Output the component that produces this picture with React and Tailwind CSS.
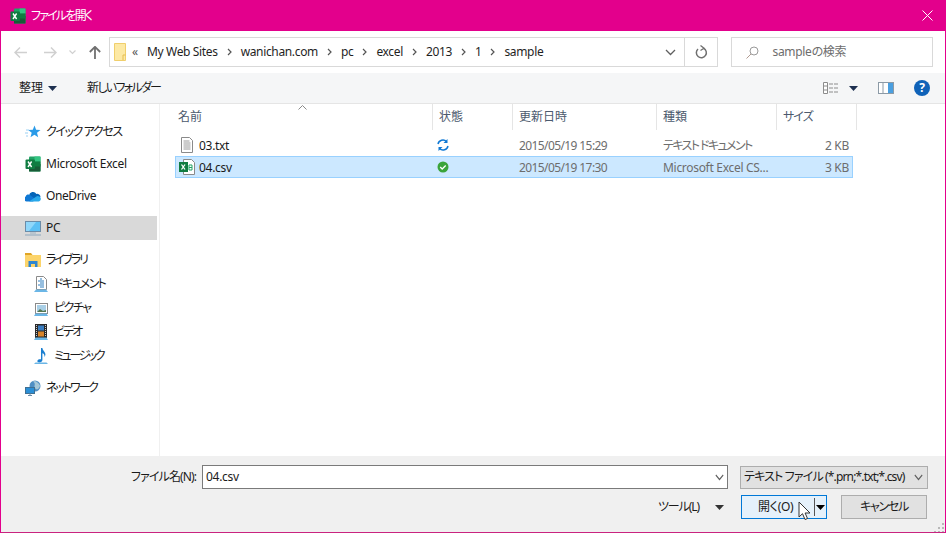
function ExcelIcon({ size = 16 }) {
  return (
    <svg width={size} height={size} viewBox="0 0 16 16" className="shrink-0">
      <rect x="4" y="0.5" width="11.5" height="15" rx="1" fill="#21a366" />
      <rect x="9.5" y="0.5" width="6" height="5" fill="#33c481" />
      <rect x="4" y="8" width="11.5" height="7.5" fill="#185c37" />
      <rect x="9.5" y="5.5" width="6" height="5" fill="#107c41" />
      <rect x="0.5" y="3.5" width="9.5" height="9.5" rx="1" fill="#107c41" />
      <path d="M3 5.5l3.6 5.5M6.6 5.5L3 11" stroke="#fff" strokeWidth="1.4" />
    </svg>
  );
}

function StarIcon() {
  return (
    <svg width="16" height="16" viewBox="0 0 16 16" className="shrink-0">
      <path d="M9.5 1.5l1.6 4.2 4.4.2-3.5 2.8 1.2 4.6-3.8-2.6-3.9 2.6 1.2-4.6-3.4-2.8 4.5-.2z" fill="#2a9be8" />
      <path d="M1 6h3M0 9h3M1 12h2" stroke="#9bd0f2" strokeWidth="1" />
    </svg>
  );
}

function CloudIcon() {
  return (
    <svg width="16" height="16" viewBox="0 0 16 16" className="shrink-0">
      <path d="M4 7.5a4 4 0 0 1 7.4-1.6A3.4 3.4 0 0 1 15.5 9L8 12z" fill="#0364b8" />
      <path d="M1.5 13.5a2.6 2.6 0 0 1-.8-5A2.8 2.8 0 0 1 5 6.9l6 4.6-3 2z" fill="#0f78d4" />
      <path d="M4 13.5L11 8.7a2.9 2.9 0 0 1 4.7 2.9c-.2 1-1 1.9-2 1.9z" fill="#28a8ea" />
    </svg>
  );
}

function PcIcon() {
  return (
    <svg width="16" height="16" viewBox="0 0 16 16" className="shrink-0">
      <rect x="0.5" y="1.5" width="15" height="10" fill="#5cc0f5" stroke="#6b8ca8" />
      <path d="M1 2h10L4 11H1z" fill="#90d7fa" />
      <path d="M5 13h6" stroke="#9cb4c6" strokeWidth="1" />
      <path d="M0 15h16" stroke="#8ba7bd" strokeWidth="1" />
    </svg>
  );
}

function LibraryIcon() {
  return (
    <svg width="16" height="16" viewBox="0 0 16 16" className="shrink-0">
      <path d="M0 1h6l1.5 2H0z" fill="#e0a526" />
      <rect x="0" y="3" width="16" height="12" fill="#fcd46a" />
      <path d="M3.5 15V9h9v6H10v-3H6v3z" fill="#2e86d0" />
    </svg>
  );
}

function DocLibIcon() {
  return (
    <svg width="16" height="16" viewBox="0 0 16 16" className="shrink-0">
      <path d="M3.5 0.5h7l3 3v10h-10z" fill="#fff" stroke="#8a8a8a" />
      <path d="M7 3h2M5 5h6M7 7h4M5 9h6M7 11h4" stroke="#2f7fbf" strokeWidth="1" />
      <path d="M1 16h14l-2-2.5H3z" fill="#6bb6e6" />
    </svg>
  );
}

function PicLibIcon() {
  return (
    <svg width="16" height="16" viewBox="0 0 16 16" className="shrink-0">
      <rect x="2.5" y="3.5" width="12" height="10" fill="#fff" stroke="#8a8a8a" />
      <rect x="4" y="5" width="9" height="7" fill="#a9cfe6" />
      <path d="M4 12l3-3 3 2 3-1v2z" fill="#56784f" />
      <path d="M1 16h14l-1.5-2.5h-11z" fill="#6bb6e6" />
    </svg>
  );
}

function VideoLibIcon() {
  return (
    <svg width="16" height="16" viewBox="0 0 16 16" className="shrink-0">
      <rect x="2" y="0" width="12" height="14" fill="#2a2a2a" />
      <rect x="5" y="1.5" width="6" height="5" fill="#3a7dc0" />
      <rect x="5" y="7.5" width="6" height="5" fill="#d8842a" />
      <path d="M3.5 1v12M12.5 1v12" stroke="#cfcfcf" strokeWidth="1" strokeDasharray="1 1" />
      <path d="M1 16h14l-1.5-2.5h-11z" fill="#6bb6e6" />
    </svg>
  );
}

function MusicLibIcon() {
  return (
    <svg width="16" height="16" viewBox="0 0 16 16" className="shrink-0">
      <path d="M8 0h1.400c.3 3 3 3.600 3 6.500 0 1-.4 1.800-.9 2.500.3-2.500-1-3.500-2.100-3.800V12c0 1.500-1.500 2.500-3 2.500S4 13.600 4.500 12.500 6.500 11 8 11.300z" fill="#1b7fd0" />
      <path d="M1 16h14l-1.500-1.500h-11z" fill="#6bb6e6" />
    </svg>
  );
}

function NetworkIcon() {
  return (
    <svg width="16" height="16" viewBox="0 0 16 16" className="shrink-0">
      <circle cx="10" cy="6" r="5.5" fill="#4f8fc4" />
      <path d="M8 1.500c2 1 2 3 1.500 4.500s1 3 2.500 3.500c2-1 3-2.500 3-4-1-2-3-4-5-4.500z" fill="#a6c8d8" />
      <rect x="0.5" y="7.5" width="9" height="6" fill="#2b8fd6" stroke="#3f6f92" />
      <path d="M3 15.500h4M5 13.500v2" stroke="#6b8ca8" />
    </svg>
  );
}

function NavRow({ icon, label, indent, active, tracking = "tracking-[-0.2px]" }) {
  return (
    <div className={`flex h-6 items-center gap-[5px] ${indent ? "pl-8" : "pl-6"} ${active ? "bg-[#d9d9d9]" : ""}`}>
      {icon}
      <span className={`whitespace-nowrap text-xs text-[#1a1a1a] ${tracking}`}>{label}</span>
    </div>
  );
}

function Caret({ className = "" }) {
  return (
    <svg width="9" height="5" viewBox="0 0 9 5" className={className}>
      <path d="M0 0h9L4.5 5z" fill="currentColor" />
    </svg>
  );
}

function Chevron({ width = 11, color = "#606060" }) {
  return (
    <svg width={width} height="7" viewBox="0 0 11 7" preserveAspectRatio="none" className="shrink-0">
      <path d="M1 1l4.5 4.500L10 1" fill="none" stroke={color} strokeWidth="1.300" />
    </svg>
  );
}

function Crumb({ text }) {
  return (
    <>
      <span className="whitespace-nowrap text-xs tracking-[-0.35px] text-[#1f1f1f]">{text}</span>
      <svg width="5" height="8" viewBox="0 0 5 8" className="mx-[9px] shrink-0">
        <path d="M1 1l3 3-3 3" fill="none" stroke="#555" strokeWidth="1.200" />
      </svg>
    </>
  );
}

function HeaderCell({ label, className }) {
  return (
    <div className={`flex h-[26px] items-center border-r border-[#e5e5e5] text-xs text-[#4c5a6e] ${className}`}>
      {label}
    </div>
  );
}

function FileRow({ icon, name, status, date, type, typeTracking, size, selected }) {
  return (
    <div
      className={`flex h-[22px] w-[678px] items-center border text-xs ${
        selected ? "border-[#99d1ff] bg-[#cce8ff]" : "border-transparent"
      }`}
    >
      <div className="flex w-[256px] items-center gap-[4px] pl-[3px] tracking-[-0.3px] text-[#1a1a1a]">
        {icon}
        <span className="pt-[1px]">{name}</span>
      </div>
      <div className="flex w-[80px] items-center pl-[5px]">{status}</div>
      <div className="w-[144px] pl-[7px] pt-[1px] tracking-[-0.6px] text-[#6d6d6d]">{date}</div>
      <div className={`w-[120px] whitespace-nowrap pl-[7px] pt-[1px] text-[#6d6d6d] ${typeTracking}`}>{type}</div>
      <div className="flex-1 pr-[3px] pt-[1px] text-right tracking-[-0.3px] text-[#6d6d6d]">{size}</div>
    </div>
  );
}

export default function App() {
  return (
    <div className="relative flex h-[533px] w-[946px] flex-col overflow-hidden border border-t-0 border-[#e3008c] border-b-[#c9237f] bg-white [font-family:'Noto_Sans','Noto_Sans_CJK_JP',sans-serif] [font-feature-settings:'palt']">
      {/* title bar */}
      <div className="flex h-[31px] shrink-0 items-center bg-[#e3008c] pl-[9px] pr-[12px] text-white">
        <ExcelIcon />
        <span className="ml-[5px] text-xs tracking-[-1.8px]">ファイルを開く</span>
        <svg width="11" height="11" viewBox="0 0 11 11" className="ml-auto">
          <path d="M0.5 0.5l10 10M10.5 0.5l-10 10" stroke="#fff" strokeWidth="1" />
        </svg>
      </div>

      {/* nav row */}
      <div className="flex h-[42px] shrink-0 items-center pl-[13px] pr-[12px]">
        <svg width="13" height="11" viewBox="0 0 13 11">
          <path d="M6 0.5L1 5.500l5 5M1 5.500h12" fill="none" stroke="#d0d0d0" strokeWidth="1.500" />
        </svg>
        <svg width="13" height="11" viewBox="0 0 13 11" className="ml-[17px]">
          <path d="M7 0.500l5 5-5 5M12 5.500H0" fill="none" stroke="#d0d0d0" strokeWidth="1.500" />
        </svg>
        <svg width="7" height="5" viewBox="0 0 7 5" className="ml-[12px]">
          <path d="M0.5 0.5l3 3 3-3" fill="none" stroke="#d0d0d0" strokeWidth="1.200" />
        </svg>
        <svg width="12" height="13" viewBox="0 0 12 13" className="ml-[13px]">
          <path d="M0.800 6L6 0.800 11.200 6M6 1v12" fill="none" stroke="#707070" strokeWidth="1.800" />
        </svg>
        <div className="ml-[8px] flex h-[30px] w-[611px] items-center border border-[#d9d9d9] pl-[4px]">
          <svg width="12" height="18" viewBox="0 0 12 18" className="shrink-0">
            <path d="M0.5 0.5h11v17h-11z" fill="#fde9a4" stroke="#f0cf6c" />
            <path d="M9 17v-5h2.500" fill="none" stroke="#e6bd50" />
          </svg>
          <span className="ml-[6px] mr-[9px] text-xs text-[#555]">«</span>
          <Crumb text="My Web Sites" />
          <Crumb text="wanichan.com" />
          <Crumb text="pc" />
          <Crumb text="excel" />
          <Crumb text="2013" />
          <Crumb text="1" />
          <span className="text-xs tracking-[-0.35px] text-[#1f1f1f]">sample</span>
          <div className="ml-auto flex h-full items-center">
            <Chevron />
            <div className="ml-[8px] flex h-full w-[33px] items-center justify-center border-l border-[#d9d9d9]">
              <svg width="13" height="14" viewBox="0 0 13 14">
                <path d="M8.500 3.200A5 5 0 1 1 3 4" fill="none" stroke="#707070" strokeWidth="1.500" />
                <path d="M5.500 0.500l3.500 2.700-3.500 2.300" fill="none" stroke="#707070" strokeWidth="1.300" />
              </svg>
            </div>
          </div>
        </div>
        <div className="ml-[13px] flex h-[30px] w-[202px] items-center border border-[#d9d9d9] pl-[14px]">
          <svg width="13" height="13" viewBox="0 0 13 13">
            <circle cx="8" cy="5" r="4" fill="none" stroke="#9a9a9a" />
            <path d="M5 8l-4.500 4.500" stroke="#b09a90" strokeWidth="1" />
          </svg>
          <span className="ml-[13px] text-xs tracking-[-0.3px] text-[#6d6d6d]">sampleの検索</span>
        </div>
      </div>

      {/* toolbar */}
      <div className="flex h-[31px] shrink-0 items-center border-b border-[#e5e5e5] bg-[#f5f6f7] pl-[18px] pr-[15px] text-xs text-[#1a1a1a]">
        <span>整理</span>
        <Caret className="ml-[5px] text-[#1e3050]" />
        <span className="ml-[30px] tracking-[-1.7px]">新しいフォルダー</span>
        <svg width="16" height="12" viewBox="0 0 16 12" className="ml-auto">
          <path d="M0.5 0.5h4v11h-4zM0.5 4h4M0.5 8h4" fill="#fff" stroke="#8c8c8c" />
          <path d="M6 2h4M11 2h4M6 6h4M11 6h4M6 10h4M11 10h4" stroke="#8c8c8c" />
        </svg>
        <Caret className="ml-[10px] text-[#1e3050]" />
        <svg width="16" height="12" viewBox="0 0 16 12" className="ml-[20px]">
          <rect x="0.5" y="0.5" width="15" height="11" fill="#fff" stroke="#8c9aa6" />
          <path d="M5 1v10" stroke="#8c9aa6" />
          <rect x="10" y="1" width="5" height="10" fill="#4a9fe0" />
        </svg>
        <div className="ml-[20px] flex h-4 w-4 items-center justify-center rounded-full bg-[#0f62b8] text-xs font-bold text-white">
          ?
        </div>
      </div>

      {/* main */}
      <div className="flex min-h-0 flex-1">
        <aside className="w-[159px] shrink-0 border-r border-[#f0f0f0] pt-[16px] pr-[2px]">
          <div className="flex flex-col gap-2">
            <NavRow icon={<StarIcon />} label="クイック アクセス" tracking="tracking-[-1.4px]" />
            <NavRow icon={<ExcelIcon />} label="Microsoft Excel" tracking="tracking-[-0.25px]" />
            <NavRow icon={<CloudIcon />} label="OneDrive" tracking="tracking-[-0.4px]" />
            <NavRow icon={<PcIcon />} label="PC" active />
            <div>
              <NavRow icon={<LibraryIcon />} label="ライブラリ" tracking="tracking-[-2.2px]" />
              <NavRow icon={<DocLibIcon />} label="ドキュメント" indent tracking="tracking-[-1.7px]" />
              <NavRow icon={<PicLibIcon />} label="ピクチャ" indent tracking="tracking-[-1.5px]" />
              <NavRow icon={<VideoLibIcon />} label="ビデオ" indent tracking="tracking-[-2px]" />
              <NavRow icon={<MusicLibIcon />} label="ミュージック" indent tracking="tracking-[-2.4px]" />
            </div>
            <NavRow icon={<NetworkIcon />} label="ネットワーク" tracking="tracking-[-2.1px]" />
          </div>
        </aside>
        <section className="min-w-0 flex-1 pl-[15px]">
          <div className="relative flex">
            <HeaderCell label="名前" className="w-[258px] pl-[3px]" />
            <HeaderCell label="状態" className="w-[80px] pl-[6px]" />
            <HeaderCell label="更新日時" className="w-[144px] pl-[6px]" />
            <HeaderCell label="種類" className="w-[120px] pl-[6px]" />
            <HeaderCell label="サイズ" className="w-[80px] pl-[6px] tracking-[-1px]" />
            <svg width="9" height="5" viewBox="0 0 9 5" className="absolute left-[123px] top-[1px]">
              <path d="M0.5 4.500l4-4 4 4" fill="none" stroke="#8a8a8a" />
            </svg>
          </div>
          <div className="mt-[4px]">
            <FileRow
              icon={
                <svg width="16" height="16" viewBox="0 0 16 16" className="shrink-0">
                  <path d="M2.5 0.5h8l3 3v12h-11z" fill="#fff" stroke="#8a8a8a" />
                  <path d="M4.500 4h6M4.500 6h7M4.500 8h7M4.500 10h7M4.500 12h7" stroke="#9a9a9a" />
                </svg>
              }
              name="03.txt"
              status={
                <svg width="12" height="12" viewBox="0 0 12 12">
                  <path d="M1 5a5 5 0 0 1 8.500-2.500M11 7a5 5 0 0 1-8.500 2.500" fill="none" stroke="#0f78d4" strokeWidth="1.500" />
                  <path d="M10.500 0v4h-4zM1.500 12V8h4z" fill="#0f78d4" />
                </svg>
              }
              date="2015/05/19 15:29"
              type="テキスト ドキュメント"
              typeTracking="tracking-[-1.6px]"
              size="2 KB"
            />
            <FileRow
              selected
              icon={
                <svg width="16" height="16" viewBox="0 0 16 16" className="shrink-0">
                  <path d="M4.5 0.5h8l3 3v12h-11z" fill="#fff" stroke="#8a8a8a" />
                  <rect x="0" y="3" width="9" height="10" fill="#107c41" />
                  <path d="M2.500 5.500l3.500 5M6 5.500l-3.500 5" stroke="#fff" strokeWidth="1.300" />
                  <path d="M10 6h3v5h-3zM10 8.500h3" fill="none" stroke="#21a366" />
                </svg>
              }
              name="04.csv"
              status={
                <svg width="12" height="12" viewBox="0 0 12 12">
                  <circle cx="6" cy="6" r="5.500" fill="#3aa43a" />
                  <path d="M3.200 6l2 2 3.500-3.500" fill="none" stroke="#fff" strokeWidth="1.300" />
                </svg>
              }
              date="2015/05/19 17:30"
              type="Microsoft Excel CS..."
              typeTracking="tracking-[-0.3px]"
              size="3 KB"
            />
          </div>
        </section>
      </div>

      {/* bottom */}
      <div className="relative h-[76px] shrink-0 bg-[#f0f0f0] text-xs text-[#1a1a1a]">
        <div className="flex items-center pt-[9px]">
          <span className="w-[196px] whitespace-nowrap pr-[1px] text-right tracking-[-0.9px]">ファイル名(N):</span>
          <div className="ml-[5px] flex h-6 w-[526px] items-center justify-between border border-[#7a7a7a] bg-white pl-[3px] pr-[3px] tracking-[-0.3px]">
            <span>04.csv</span>
            <Chevron width={9} />
          </div>
          <div className="ml-[12px] flex h-[23px] w-[188px] items-center justify-between border border-[#adadad] bg-[#e1e1e1] pl-[3px] pr-[4px] tracking-[-0.85px]">
            <span className="whitespace-nowrap">テキスト ファイル (*.prn;*.txt;*.csv)</span>
            <Chevron width={9} />
          </div>
        </div>
        <div className="mt-[6px] flex items-center justify-end pr-[18px]">
          <span className="tracking-[-1.1px]">ツール(L)</span>
          <Caret className="ml-[16px] text-[#333]" />
          <div className="ml-[17px] flex h-6 w-[86px] items-center border border-[#0078d7] bg-[#e5f1fb] pl-[16px]">
            <span className="tracking-[-0.3px]">開く(O)</span>
            <span className="ml-auto h-[18px] w-[1px] bg-[#555]" />
            <Caret className="mx-[1px] text-black" />
          </div>
          <div className="ml-[14px] flex h-6 w-[86px] items-center justify-center border border-[#adadad] bg-[#e1e1e1] tracking-[-1.3px]">
            キャンセル
          </div>
        </div>
        <svg width="11" height="11" viewBox="0 0 11 11" className="absolute bottom-0 right-0">
          <path d="M8 2h2v2H8zM4 6h2v2H4zM8 6h2v2H8zM0 10h2v1H0zM4 10h2v1H4zM8 10h2v1H8z" fill="#b8b8b8" />
        </svg>
        {/* mouse pointer */}
        <svg width="14" height="20" viewBox="0 0 14 20" className="absolute left-[797px] top-[45px]">
          <path d="M1 1v15l3.500-3.300L7 18.500l2.500-1-2.400-5.500H12z" fill="#fff" stroke="#333" strokeWidth="1" />
        </svg>
      </div>
    </div>
  );
}
